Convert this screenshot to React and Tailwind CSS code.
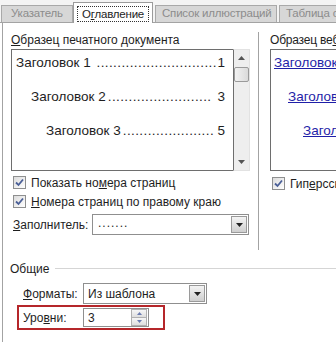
import React from 'react';

const font = { fontFamily: '"Liberation Sans", Arial, sans-serif' };

function Check({ label }) {
  return (
    <div className="flex items-center h-[19px]">
      <span className="w-[13px] h-[13px] border border-[#8e8f8f] bg-gradient-to-br from-[#dcdcdc] to-white flex items-center justify-center mr-[5px] shrink-0">
        <svg width="9" height="9" viewBox="0 0 9 9">
          <path d="M1 4.5 L3.5 7 L8 1.5" stroke="#4a5f97" strokeWidth="1.8" fill="none" />
        </svg>
      </span>
      <span>{label}</span>
    </div>
  );
}

function DropBtn() {
  return (
    <span className="w-[16px] h-[17px] border border-[#9a9a9a] bg-gradient-to-b from-[#f4f4f4] to-[#cfcfcf] flex items-center justify-center shrink-0">
      <svg width="7" height="4" viewBox="0 0 7 4">
        <path d="M0 0 L7 0 L3.5 4 Z" fill="#222" />
      </svg>
    </span>
  );
}

function TocLine({ title, dots, page, indent }) {
  return (
    <div className="flex items-end justify-between whitespace-nowrap h-[34px] pb-[11px]" style={{ paddingLeft: indent }}>
      <span>
        {title}
        <span className="tracking-[0.4px] ml-[2px]">{'.'.repeat(dots)}</span>
      </span>
      <span className="shrink-0">{page}</span>
    </div>
  );
}

export default function App() {
  return (
    <div className="w-[336px] h-[342px] bg-white overflow-hidden text-[12px] text-[#1e1e1e]" style={font}>
      {/* tabs */}
      <div className="h-[23px] flex items-end bg-[#f4f4f4] border-b border-[#a3a3a3] pl-[1px] whitespace-nowrap text-[11.5px] tracking-[-0.2px]">
        <div className="w-[72px] h-[17px] shrink-0 border border-b-0 border-[#a9a9a9] bg-[#d7d7d7] text-[#8c8c8c] pl-[9px] leading-[15px]">Указатель</div>
        <div className="w-[80px] h-[21px] shrink-0 border border-b-0 border-[#9b9b9b] bg-white -mb-px relative z-10 flex items-start justify-center pt-[3px] text-[#1e1e1e]">
          <span className="border border-dotted border-[#333] px-[4px] leading-[14px]">О<u>г</u>лавление</span>
        </div>
        <div className="w-[122px] h-[17px] shrink-0 ml-[2px] border border-b-0 border-[#a9a9a9] bg-[#d7d7d7] text-[#8c8c8c] pl-[6px] leading-[15px] overflow-hidden">Список иллюстраций</div>
        <div className="w-[70px] h-[17px] shrink-0 ml-[2px] border border-b-0 border-[#a9a9a9] bg-[#d7d7d7] text-[#8c8c8c] pl-[6px] leading-[15px]">Таблица ссылок</div>
      </div>

      {/* panel */}
      <div className="ml-[2px] border-l border-[#a3a3a3] h-[320px]">
        <div className="flex pt-[9px]">
          {/* left: print preview */}
          <div className="w-[255px] pl-[8px] shrink-0">
            <div className="h-[17px] leading-[17px]"><u>О</u>бразец печатного документа</div>
            <div className="flex h-[122px]">
              <div className="w-[222px] border border-[#6e6e6e] border-r-0 pl-[4px] pr-[8px] text-[13.5px] bg-white">
                <TocLine title="Заголовок 1 " dots={29} page="1" indent={0} />
                <TocLine title="Заголовок 2" dots={25} page="3" indent={15} />
                <TocLine title="Заголовок 3" dots={22} page="5" indent={30} />
              </div>
              <div className="w-[17px] bg-[#eeeeee] border border-[#e2e2e2] border-l-[#6e6e6e] flex flex-col items-center">
                <svg width="7" height="4" viewBox="0 0 7 4" className="mt-[6px]"><path d="M0 4 L7 4 L3.5 0 Z" fill="#555" /></svg>
                <div className="w-[15px] h-[15px] mt-[7px] border border-[#9a9a9a] bg-gradient-to-r from-[#f2f2f2] to-[#dadada] rounded-[2px]" />
                <div className="flex-1" />
                <svg width="7" height="4" viewBox="0 0 7 4" className="mb-[6px]"><path d="M0 0 L7 0 L3.5 4 Z" fill="#555" /></svg>
              </div>
            </div>
            <div className="mt-[2px] pl-[2px]">
              <Check label={<>Показать но<u>м</u>ера страниц</>} />
              <Check label={<><u>Н</u>омера страниц по правому краю</>} />
            </div>
            <div className="flex items-center mt-[3px]">
              <span className="w-[81px] pl-[2px]"><u>З</u>аполнитель:</span>
              <div className="w-[157px] h-[21px] border border-[#8f8f8f] flex items-center justify-between pl-[5px] pr-[1px]">
                <span className="-mt-[4px] tracking-[1px]">.......</span>
                <DropBtn />
              </div>
            </div>
          </div>

          {/* separator */}
          <div className="w-px h-[218px] bg-[#a3a3a3] shrink-0" />

          {/* right: web preview */}
          <div className="flex-1 min-w-0 pl-[11px] overflow-hidden whitespace-nowrap">
            <div className="h-[17px] leading-[17px] tracking-[-0.2px]">Образец ве<u>б</u>-документа</div>
            <div className="h-[122px] border border-[#6e6e6e] border-r-0 text-[13.5px] text-[#1f1fa8] pl-[3px]">
              <div className="h-[23px] flex items-end"><u>Заголовок 1</u></div>
              <div className="h-[34px] flex items-end pl-[14px]"><u>Заголовок 2</u></div>
              <div className="h-[34px] flex items-end pl-[29px]"><u>Заголовок 3</u></div>
            </div>
            <div className="mt-[3px] pl-[2px]">
              <Check label={<>Гип<u>е</u>рссылки вместо номеров страниц</>} />
            </div>
          </div>
        </div>

        {/* general */}
        <div className="mt-[10px] pl-[7px]">
          <div className="flex items-center h-[17px]">
            <span>Общие</span>
            <div className="flex-1 h-px bg-[#d5d5d5] ml-[6px]" />
          </div>
          <div className="flex items-center mt-[6px] pl-[13px]">
            <span className="w-[60px]"><u>Ф</u>орматы:</span>
            <div className="w-[124px] h-[21px] border border-[#8f8f8f] flex items-center justify-between pl-[4px] pr-[1px]">
              <span>Из шаблона</span>
              <DropBtn />
            </div>
          </div>
          <div className="mt-[1px] ml-[7px] w-[148px] h-[25px] border-2 border-[#b5262a] flex items-center pl-[4px]">
            <span className="w-[60px]">Уро<u>в</u>ни:</span>
            <div className="w-[66px] h-[19px] border border-[#8f8f8f] flex items-center justify-between pl-[4px] pr-[1px]">
              <span>3</span>
              <div className="flex flex-col w-[16px] h-[17px] border border-[#b0b0b0]">
                <div className="flex-1 bg-gradient-to-b from-[#f6f6f6] to-[#dedede] border-b border-[#b0b0b0] flex items-center justify-center">
                  <svg width="5" height="3" viewBox="0 0 5 3"><path d="M0 3 L5 3 L2.5 0 Z" fill="#6a7bb0" /></svg>
                </div>
                <div className="flex-1 bg-gradient-to-b from-[#f6f6f6] to-[#dedede] flex items-center justify-center">
                  <svg width="5" height="3" viewBox="0 0 5 3"><path d="M0 0 L5 0 L2.5 3 Z" fill="#6a7bb0" /></svg>
                </div>
              </div>
            </div>
          </div>
        </div>
      </div>
    </div>
  );
}
